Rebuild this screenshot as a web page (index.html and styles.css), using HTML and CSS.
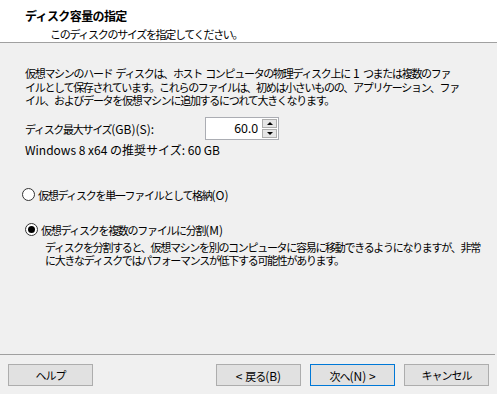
FILE: index.html
```html
<!DOCTYPE html>
<html lang="ja">
<head>
    <meta charset="UTF-8">
    <meta name="viewport" content="width=device-width, initial-scale=1.0">
    <title>ディスク容量の指定</title>
    <link rel="stylesheet" href="styles.css">
</head>
<body>
    <div class="wizard">
        <header class="wizard-header">
            <div class="wizard-title">ディスク容量の指定</div>
            <div class="wizard-subtitle">このディスクのサイズを指定してください。</div>
        </header>
        <main class="wizard-body">
            <p class="intro">仮想マシンのハード ディスクは、ホスト コンピュータの物理ディスク上に <span class="latin">1</span> つまたは複数のファ<br>イルとして保存されています。これらのファイルは、初めは小さいものの、アプリケーション、ファ<br>イル、およびデータを仮想マシンに追加するにつれて大きくなります。</p>
            <div class="size-row">
                <label for="disk-size">ディスク最大サイズ<span class="latin">(GB)(S):</span></label>
                <div class="spin">
                    <input type="text" id="disk-size" value="60.0">
                    <div class="spin-buttons">
                        <span class="spin-btn"><span class="tri-up"></span></span>
                        <span class="spin-btn"><span class="tri-down"></span></span>
                    </div>
                </div>
            </div>
            <div class="recommend">Windows 8 x64 の推奨サイズ: 60 GB</div>
            <div class="option option-single">
                <span class="radio"></span>
                <span>仮想ディスクを単一ファイルとして格納<span class="latin">(O)</span></span>
            </div>
            <div class="option option-split">
                <span class="radio checked"></span>
                <span>仮想ディスクを複数のファイルに分割<span class="latin">(M)</span></span>
            </div>
            <p class="option-note">ディスクを分割すると、仮想マシンを別のコンピュータに容易に移動できるようになりますが、非常<br>に大きなディスクではパフォーマンスが低下する可能性があります。</p>
        </main>
        <footer class="wizard-footer">
            <button class="btn">ヘルプ</button>
            <div class="nav-buttons">
                <button class="btn"><span class="latin">&lt; </span>戻る<span class="latin">(B)</span></button>
                <button class="btn btn-default">次へ<span class="latin">(N) &gt;</span></button>
                <button class="btn">キャンセル</button>
            </div>
        </footer>
    </div>
</body>
</html>
```

FILE: styles.css
```css
body {
    margin: 0;
    font-family: "Noto Sans CJK JP", "Noto Sans", sans-serif;
    font-size: 11px;
    letter-spacing: -1.3px;
    word-spacing: 2px;
    color: #000;
    background-color: #f0f0f0;
}
.latin {
    letter-spacing: 0;
    word-spacing: 0;
    font-size: 12px;
}
.wizard {
    width: 497px;
    height: 394px;
    display: flex;
    flex-direction: column;
}
.wizard-header {
    background-color: #fff;
    height: 43px;
    box-sizing: border-box;
    padding-top: 7px;
    border-bottom: 1px solid #a0a0a0;
    line-height: 18px;
}
.wizard-title {
    font-weight: bold;
    font-size: 12px;
    letter-spacing: -0.6px;
    padding-left: 25px;
}
.wizard-subtitle {
    padding-left: 50px;
}
.wizard-body {
    flex-grow: 1;
    padding: 23px 25px 0 25px;
    display: flex;
    flex-direction: column;
}
.intro {
    margin: 0;
    line-height: 13.5px;
    white-space: nowrap;
}
.size-row {
    display: flex;
    align-items: center;
    margin-top: 9px;
    height: 23px;
}
.size-row label {
    width: 180px;
}
.spin {
    display: flex;
    width: 74px;
    height: 23px;
    box-sizing: border-box;
    border: 1px solid #abadb3;
    background-color: #fff;
}
.spin input {
    width: 52px;
    border: none;
    padding: 0 4px 0 0;
    text-align: right;
    font-family: "Noto Sans", sans-serif;
    font-size: 12px;
    letter-spacing: 0;
    outline: none;
    background: transparent;
}
.spin-buttons {
    display: flex;
    flex-direction: column;
    gap: 1px;
    padding: 1px 0;
}
.spin-btn {
    width: 15px;
    height: 9px;
    box-sizing: border-box;
    border: 1px solid #adadad;
    background-color: #e5e5e5;
    display: flex;
    align-items: center;
    justify-content: center;
}
.tri-up, .tri-down {
    width: 0;
    height: 0;
    border-left: 3px solid transparent;
    border-right: 3px solid transparent;
}
.tri-up {
    border-bottom: 3px solid #000;
}
.tri-down {
    border-top: 3px solid #000;
}
.recommend {
    margin-top: 3px;
    line-height: 14px;
    letter-spacing: 0;
    word-spacing: 0;
    font-size: 12px;
}
.option {
    display: flex;
    align-items: center;
    gap: 3px;
    line-height: 14px;
}
.option-single {
    margin-top: 31px;
    margin-left: -3px;
}
.option-split {
    margin-top: 21px;
}
.radio {
    width: 13px;
    height: 13px;
    box-sizing: border-box;
    border: 1px solid #333;
    border-radius: 50%;
    background-color: #fff;
    display: flex;
    align-items: center;
    justify-content: center;
}
.radio.checked::after {
    content: "";
    width: 7px;
    height: 7px;
    border-radius: 50%;
    background-color: #000;
}
.option-note {
    margin: 4px 0 0 20px;
    line-height: 13.5px;
    white-space: nowrap;
}
.wizard-footer {
    border-top: 1px solid #a0a0a0;
    margin-right: 2px;
    padding: 9px 6px 8px 8px;
    display: flex;
    justify-content: space-between;
}
.nav-buttons {
    display: flex;
    gap: 9px;
}
.btn {
    width: 85px;
    height: 22px;
    padding: 0;
    border: 1px solid #adadad;
    background-color: #e1e1e1;
    font-family: "Noto Sans CJK JP", "Noto Sans", sans-serif;
    font-size: 11px;
    letter-spacing: -1px;
    color: #000;
}
.btn-default {
    border-color: #0078d7;
}
```
